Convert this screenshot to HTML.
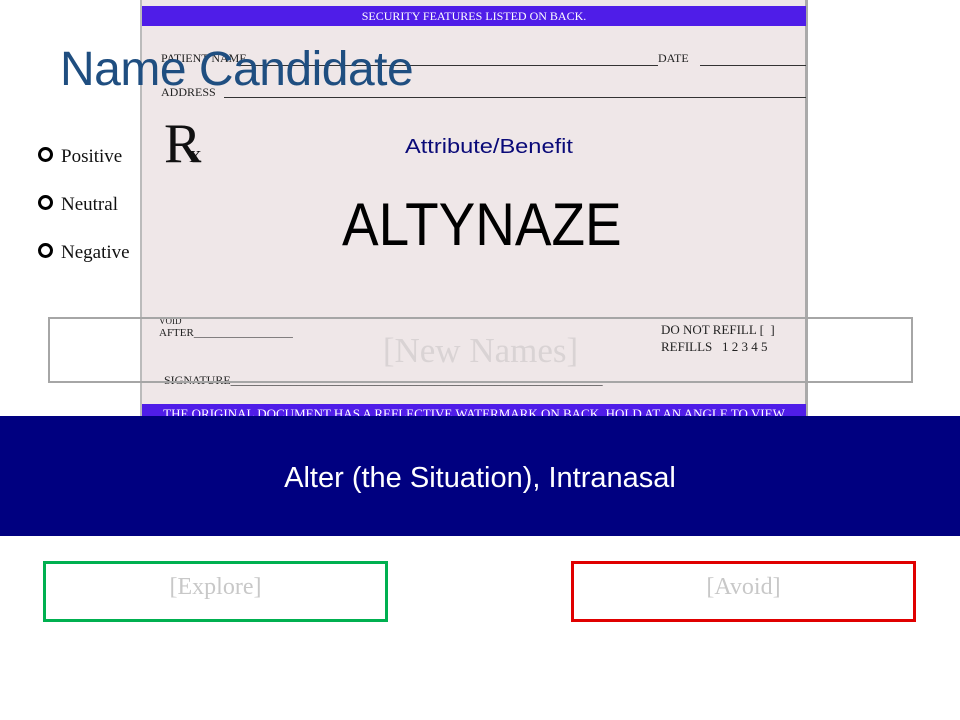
<!DOCTYPE html>
<html><head><style>
body{margin:0;width:960px;height:720px;position:relative;background:#fff;overflow:hidden;font-family:"Liberation Sans",sans-serif}
.a{position:absolute}
.serif{font-family:"Liberation Serif",serif;color:#222}
</style></head><body>
<div class="a" style="left:140px;top:0;width:668px;height:416px;background:#efe7e8;border-left:2px solid #bbb;border-right:3px solid #aaa;box-sizing:border-box"></div>
<div class="a" style="left:142px;top:6px;width:664px;height:20px;background:#4f1de8;color:#fff;font:12px 'Liberation Serif',serif;text-align:center;line-height:21px">SECURITY FEATURES LISTED ON BACK.</div>
<div class="a serif" style="left:161px;top:51px;font-size:12px">PATIENT NAME</div>
<div class="a" style="left:240px;top:65px;width:418px;border-top:1px solid #333"></div>
<div class="a serif" style="left:658px;top:51px;font-size:12px">DATE</div>
<div class="a" style="left:700px;top:65px;width:106px;border-top:1px solid #333"></div>
<div class="a serif" style="left:161px;top:85px;font-size:12px">ADDRESS</div>
<div class="a" style="left:224px;top:97px;width:582px;border-top:1px solid #333"></div>
<div class="a" style="left:60px;top:42px;font-size:48px;color:#1f4e80;letter-spacing:-0.5px">Name Candidate</div>
<div class="a serif" style="left:164px;top:112px;font-size:56px;color:#111">R<span style="font-size:24px;margin-left:-12px">x</span></div>
<div class="a" style="left:405px;top:136px;font-size:20px;color:#0a0a78;transform:scaleX(1.18);transform-origin:left">Attribute/Benefit</div>
<div class="a" style="left:342px;top:190px;font-size:60px;color:#000;transform:scaleX(0.915);transform-origin:left">ALTYNAZE</div>
<div class="a serif" style="left:38px;top:133px;font-size:19px;color:#111;line-height:48px">
<div><span style="display:inline-block;width:15px;height:15px;border:3px solid #000;border-radius:50%;box-sizing:border-box;margin-right:8px"></span>Positive</div>
<div><span style="display:inline-block;width:15px;height:15px;border:3px solid #000;border-radius:50%;box-sizing:border-box;margin-right:8px"></span>Neutral</div>
<div><span style="display:inline-block;width:15px;height:15px;border:3px solid #000;border-radius:50%;box-sizing:border-box;margin-right:8px"></span>Negative</div>
</div>
<div class="a serif" style="left:159px;top:316px;font-size:9px">VOID</div>
<div class="a serif" style="left:159px;top:327px;font-size:11px">AFTER__________________</div>
<div class="a serif" style="left:661px;top:322px;font-size:13px">DO NOT REFILL [&nbsp;&nbsp;]</div>
<div class="a serif" style="left:661px;top:339px;font-size:13px">REFILLS&nbsp;&nbsp;&nbsp;1 2 3 4 5</div>
<div class="a serif" style="left:164px;top:373px;font-size:12px">SIGNATURE______________________________________________________________</div>
<div class="a" style="left:48px;top:317px;width:865px;height:66px;border:2px solid #a6a6a6;box-sizing:border-box;text-align:center;font:35px 'Liberation Serif',serif;color:#d9d3d4;line-height:64px">[New Names]</div>
<div class="a" style="left:142px;top:404px;width:664px;height:12px;background:#4f1de8;overflow:hidden;color:#fff;font:13px 'Liberation Serif',serif;text-align:center;line-height:20px">THE ORIGINAL DOCUMENT HAS A REFLECTIVE WATERMARK ON BACK. HOLD AT AN ANGLE TO VIEW</div>
<div class="a" style="left:0;top:416px;width:960px;height:120px;background:#000080;color:#fff;font-size:29px;text-align:center;line-height:124px">Alter (the Situation), Intranasal</div>
<div class="a" style="left:43px;top:561px;width:345px;height:61px;border:3px solid #00b050;box-sizing:border-box;text-align:center;font:24px 'Liberation Serif',serif;color:#c8c8c8;line-height:46px">[Explore]</div>
<div class="a" style="left:571px;top:561px;width:345px;height:61px;border:3px solid #e00000;box-sizing:border-box;text-align:center;font:24px 'Liberation Serif',serif;color:#c8c8c8;line-height:46px">[Avoid]</div>
</body></html>
